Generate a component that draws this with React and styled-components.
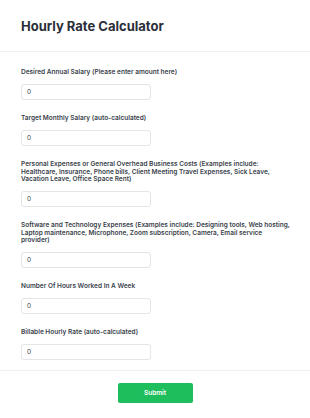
import React from 'react'
import styled, { createGlobalStyle } from 'styled-components'

const GlobalStyle = createGlobalStyle`
  body {
    margin: 0;
    background: #ffffff;
    font-family: Inter, "Liberation Sans", sans-serif;
  }
`

const fields = [
  { label: 'Desired Annual Salary (Please enter amount here)' },
  { label: 'Target Monthly Salary (auto-calculated)' },
  {
    label:
      'Personal Expenses or General Overhead Business Costs (Examples include: Healthcare, Insurance, Phone bills, Client Meeting Travel Expenses, Sick Leave, Vacation Leave, Office Space Rent)',
  },
  {
    label:
      'Software and Technology Expenses (Examples include: Designing tools, Web hosting, Laptop maintenance, Microphone, Zoom subscription, Camera, Email service provider)',
  },
  { label: 'Number Of Hours Worked In A Week' },
  { label: 'Billable Hourly Rate (auto-calculated)' },
]

const App = () => {
  return (
    <Page>
      <GlobalStyle />
      <Header>
        <h1 className="title">Hourly Rate Calculator</h1>
      </Header>
      <Form>
        {fields.map((f) => (
          <Field key={f.label}>
            <Label>{f.label}</Label>
            <Input type="text" defaultValue="0" />
          </Field>
        ))}
      </Form>
      <Footer>
        <SubmitButton type="button">Submit</SubmitButton>
      </Footer>
    </Page>
  )
}

const Page = styled.div`
  width: 310px;
  min-height: 418px;
  display: flex;
  flex-direction: column;
`

const Header = styled.div`
  height: 51px;
  display: flex;
  align-items: center;
  padding: 0 21px;
  border-bottom: 1px solid #f0f0f2;
  .title {
    margin: 0;
    font-size: 13px;
    font-weight: 700;
    color: #2b2f3a;
  }
`

const Form = styled.div`
  display: flex;
  flex-direction: column;
  gap: 15.5px;
  padding: 17px 14px 10px 21px;
`

const Field = styled.div`
  display: flex;
  flex-direction: column;
  gap: 7px;
`

const Label = styled.label`
  max-width: 269.5px;
  font-size: 6.5px;
  line-height: 7.5px;
  font-weight: 600;
  color: #3a3f4b;
`

const Input = styled.input`
  box-sizing: border-box;
  width: 130px;
  height: 16px;
  padding: 0 5px;
  border: 1px solid #e3e5ea;
  border-radius: 3px;
  font-family: Inter, "Liberation Sans", sans-serif;
  font-size: 6.5px;
  color: #3a3f4b;
  outline: none;
`

const Footer = styled.div`
  display: flex;
  justify-content: center;
  padding: 12px 0;
  border-top: 1px solid #f0f0f2;
`

const SubmitButton = styled.button`
  width: 75px;
  height: 20px;
  border: none;
  border-radius: 2px;
  background: #1fbe5c;
  color: #ffffff;
  font-family: Inter, "Liberation Sans", sans-serif;
  font-size: 6.5px;
  font-weight: 600;
  cursor: pointer;
`

export default App
